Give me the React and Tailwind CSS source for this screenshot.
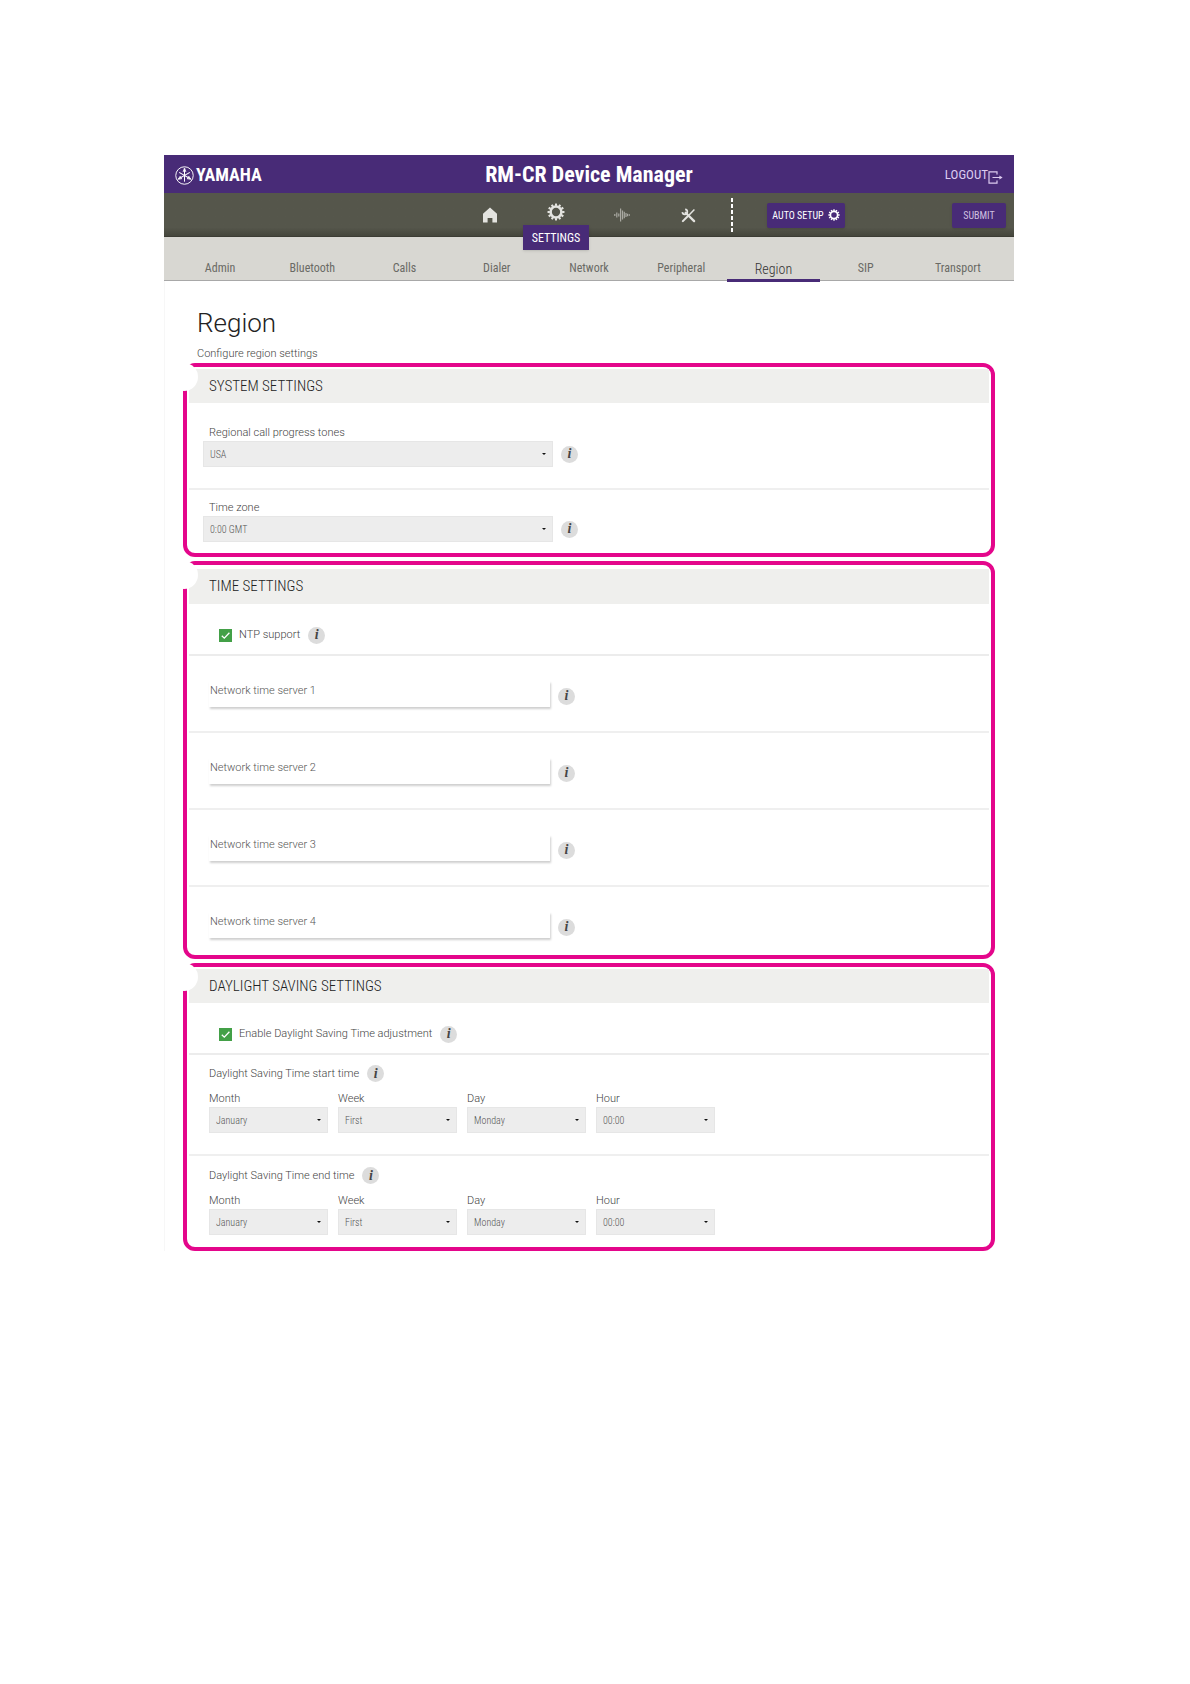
import { useState } from "react";

const TABS = ["Admin", "Bluetooth", "Calls", "Dialer", "Network", "Peripheral", "Region", "SIP", "Transport"];

function BrandMark() {
  return (
    <svg viewBox="0 0 20 20" className="size-[19px]" fill="none" stroke="currentColor" aria-hidden="true">
      <circle cx="10" cy="10" r="9.2" strokeWidth="1" />
      {[0, 120, 240].map((a) => (
        <g key={a} transform={`rotate(${a} 10 10)`}>
          <path d="M10 16.5V3" strokeWidth="1.1" />
          <path d="M8.5 6 10 2l1.5 4M8.4 5.4h3.2" strokeWidth="0.8" />
        </g>
      ))}
    </svg>
  );
}

function GearIcon({ className }) {
  return (
    <svg viewBox="0 0 20 20" className={className} fill="none" stroke="currentColor" aria-hidden="true">
      <circle cx="10" cy="10" r="6" strokeWidth="2.8" />
      {[0, 30, 60, 90, 120, 150, 180, 210, 240, 270, 300, 330].map((a) => (
        <path key={a} d="M10 3.2V.6" strokeWidth="2.3" transform={`rotate(${a} 10 10)`} />
      ))}
    </svg>
  );
}

function HomeIcon() {
  return (
    <svg viewBox="0 0 16 16" className="size-4" fill="currentColor" aria-hidden="true">
      <path d="M8 .5 1 6.8V15.5h4.6v-4.6h4.8v4.6H15V6.8z" />
    </svg>
  );
}

function WaveIcon() {
  return (
    <svg viewBox="0 0 16 16" className="size-4" stroke="currentColor" strokeWidth="1.2" aria-hidden="true">
      <path d="M.8 7v2M2.8 5.5v5M4.8 6.5v3M6.6 1.5v13M8.5 3.5v9M10.3 4.8v6.4M12 6v4M13.6 6.8v2.4M15.4 7.3v1.4" />
    </svg>
  );
}

function ToolsIcon() {
  return (
    <svg viewBox="0 0 16 16" className="size-[15px]" fill="none" stroke="currentColor" aria-hidden="true">
      <path d="M5 5l9 9" strokeWidth="2.4" strokeLinecap="round" />
      <path d="M4.4 1.4A2.7 2.7 0 1 1 1.4 4.4" strokeWidth="1.8" />
      <path d="M14.3 1.7 8.6 7.4" strokeWidth="1.6" />
      <path d="M7.2 8.8 2 14" strokeWidth="2.2" strokeLinecap="round" />
    </svg>
  );
}

function LogoutIcon() {
  return (
    <svg viewBox="0 0 15 13" className="mt-1 h-[13px] w-[15px]" fill="none" stroke="currentColor" strokeWidth="1.2" aria-hidden="true">
      <path d="M9 3.6V.8H1v11.4h8V9.4M4.5 6.5h8" />
      <path d="M11.4 4.4 14.6 6.5l-3.2 2.1z" fill="currentColor" stroke="none" />
    </svg>
  );
}

function Info({ about }) {
  return (
    <button
      type="button"
      aria-label={`About ${about}`}
      className="flex size-[17px] shrink-0 items-center justify-center rounded-full bg-[#dcdcdc] font-['Liberation_Serif',serif] text-[14px] leading-none font-bold text-[#444] italic"
    >
      i
    </button>
  );
}

function Select({ id, value }) {
  return (
    <div className="relative">
      <select
        id={id}
        defaultValue={value}
        className="block h-[26px] w-full appearance-none border border-[#e6e6e6] bg-[#ededed] px-1.5 font-['Roboto_Condensed',sans-serif] text-[10px] text-[#555]"
      >
        <option>{value}</option>
      </select>
      <svg viewBox="0 0 4 2" className="pointer-events-none absolute top-3 right-[7px] h-0.5 w-1" aria-hidden="true">
        <path d="M0 0h4L2 2z" fill="#111" />
      </svg>
    </div>
  );
}

function Section({ title, tall, children }) {
  return (
    <section className={tall ? "relative rounded-xl border-4 border-[#e4068b] px-0.5 pt-1" : "relative rounded-xl border-4 border-[#e4068b] px-0.5 pt-0.5"}>
      <span className="absolute -top-1 -left-[17px] size-7 rounded-full bg-white" />
      <h2
        className={
          tall
            ? "flex h-[35px] items-center bg-[#efefed] pl-5 font-['Roboto_Condensed',sans-serif] text-[15px] font-light text-[#222]"
            : "flex h-[34px] items-center bg-[#efefed] pl-5 font-['Roboto_Condensed',sans-serif] text-[15px] font-light text-[#222]"
        }
      >
        {title}
      </h2>
      {children}
    </section>
  );
}

function SelectRow({ id, label, value, className }) {
  return (
    <div className={`pl-3.5 ${className}`}>
      <label htmlFor={id} className="block pl-1.5 text-[11px] leading-4 text-[#444]">
        {label}
      </label>
      <div className="flex items-center gap-2">
        <div className="w-[350px]">
          <Select id={id} value={value} />
        </div>
        <Info about={label} />
      </div>
    </div>
  );
}

function CheckRow({ id, label }) {
  const [on, setOn] = useState(true);
  return (
    <div className="flex h-[52px] items-center border-b-2 border-[#ececec] pt-3 pl-[30px]">
      <span className="relative flex">
        <input
          id={id}
          type="checkbox"
          checked={on}
          onChange={(e) => setOn(e.target.checked)}
          className="size-[13px] appearance-none border border-[#43a047] checked:bg-[#43a047]"
        />
        {on && (
          <svg viewBox="0 0 13 13" className="pointer-events-none absolute inset-0" fill="none" stroke="#fff" strokeWidth="1.3" aria-hidden="true">
            <path d="M2.8 6.8 5.3 9.2 10.4 3.8" />
          </svg>
        )}
      </span>
      <label htmlFor={id} className="mr-2 ml-[7px] text-[11px] leading-4 text-[#444]">
        {label}
      </label>
      <Info about={label} />
    </div>
  );
}

function ServerRow({ n, last }) {
  const id = `ntp-server-${n}`;
  return (
    <div className={last ? "h-[68px] pt-[25px] pl-5" : "h-[77px] border-b-2 border-[#efefef] pt-[25px] pl-5"}>
      <div className="flex items-center gap-2">
        <div className="relative w-[341px]">
          <label htmlFor={id} className="absolute top-0.5 left-px text-[11px] leading-4 text-[#555]">
            Network time server {n}
          </label>
          <input id={id} type="text" className="block h-[26px] w-full bg-white shadow-[1px_2px_2px_#cfcfcf] outline-none" />
        </div>
        <span className="mt-1">
          <Info about={`network time server ${n}`} />
        </span>
      </div>
    </div>
  );
}

function DstRow({ name, className }) {
  const fields = [
    ["Month", "January"],
    ["Week", "First"],
    ["Day", "Monday"],
    ["Hour", "00:00"],
  ];
  return (
    <fieldset className={`block pl-5 ${className}`}>
      <div className="flex items-center gap-2">
        <span className="text-[11px] leading-4 text-[#444]">Daylight Saving Time {name} time</span>
        <Info about={`Daylight Saving Time ${name} time`} />
      </div>
      <div className="mt-[9px] flex gap-2.5">
        {fields.map(([label, value]) => (
          <div key={label} className="w-[119px]">
            <label htmlFor={`${name}-${label}`} className="block text-[11px] leading-4 text-[#444]">
              {label}
            </label>
            <Select id={`${name}-${label}`} value={value} />
          </div>
        ))}
      </div>
    </fieldset>
  );
}

export default function App() {
  return (
    <div className="min-h-screen bg-white pt-[155px] pr-[176px] pb-16 pl-[164px] font-['Roboto',sans-serif] font-light">
      <header className="font-['Roboto_Condensed',sans-serif]">
        <div className="grid h-[38px] grid-cols-[1fr_auto_1fr] items-center bg-[#482b77] px-[11px] pt-0.5 text-white">
          <div className="flex items-center gap-0.5">
            <BrandMark />
            <span className="text-[18px] leading-6 font-bold">YAMAHA</span>
          </div>
          <h1 className="text-[22px] leading-7 font-bold">RM-CR Device Manager</h1>
          <a href="#logout" className="flex items-center justify-self-end text-[13px] font-normal text-[#dccbf0]">
            LOGOUT
            <LogoutIcon />
          </a>
        </div>

        <div className="grid h-11 grid-cols-[1fr_auto_1fr] border-b border-[#3c3c34] bg-linear-to-b from-[#55564b] from-80% to-[#45463c] text-[#e4e4e0]">
          <span />
          <nav className="flex" aria-label="Main">
            <a href="#home" aria-label="Home" className="flex w-[66px] items-center justify-center">
              <HomeIcon />
            </a>
            <a href="#settings" className="flex h-11 w-[66px] flex-col items-center gap-1 pt-2.5">
              <GearIcon className="size-[18px] shrink-0" />
              <span className="z-10 flex h-[25px] w-full shrink-0 items-center justify-center bg-[#482b77] text-[12px] font-normal text-white shadow">SETTINGS</span>
            </a>
            <a href="#audio" aria-label="Audio" className="flex w-[66px] items-center justify-center text-[#a9a9a2]">
              <WaveIcon />
            </a>
            <a href="#tools" aria-label="Tools" className="flex w-[66px] items-center justify-center">
              <ToolsIcon />
            </a>
          </nav>
          <div className="flex items-center pr-2 pl-2.5">
            <span className="h-[34px] w-0.5 bg-[repeating-linear-gradient(to_bottom,#fff_0_4px,transparent_4px_6px)]" />
            <button type="button" className="ml-[34px] flex h-[25px] w-[78px] items-center justify-center gap-1 rounded-xs bg-[#482b77] text-[10px] font-normal text-white shadow">
              AUTO SETUP
              <GearIcon className="size-3" />
            </button>
            <button type="button" className="ml-auto h-[25px] w-[54px] rounded-xs bg-[#482b77] text-[10px] font-normal text-[#cfc0e0] shadow">
              SUBMIT
            </button>
          </div>
        </div>

        <nav className="grid h-[44px] grid-cols-9 border-b border-[#a8a8a8] bg-[#d8d7d2] px-2.5" aria-label="Settings">
          {TABS.map((t) => (
            <a
              key={t}
              href={`#${t.toLowerCase()}`}
              className={
                t === "Region"
                  ? "-mb-0.5 flex items-end justify-center border-b-[3px] border-[#482b77] text-[14px] leading-5 text-[#333]"
                  : "flex items-end justify-center pb-0.5 text-[12px] leading-5 font-normal text-[#6a6a65]"
              }
            >
              {t}
            </a>
          ))}
        </nav>
      </header>

      <main className="border-l border-[#f7f7f7] pt-6 pr-[19px] pl-[18px]">
        <h2 className="pl-3.5 text-[26px] leading-9 text-[#222]">Region</h2>
        <p className="pt-[5px] pb-px pl-3.5 text-[11px] leading-4 text-[#444]">Configure region settings</p>
        <div className="flex flex-col gap-1">
          <Section title="SYSTEM SETTINGS">
            <SelectRow id="tones" label="Regional call progress tones" value="USA" className="h-[87px] border-b-2 border-[#efefef] pt-[22px]" />
            <SelectRow id="zone" label="Time zone" value="0:00 GMT" className="h-[63px] pt-2.5" />
          </Section>
          <Section title="TIME SETTINGS" tall>
            <CheckRow id="ntp" label="NTP support" />
            <ServerRow n={1} />
            <ServerRow n={2} />
            <ServerRow n={3} />
            <ServerRow n={4} last />
          </Section>
          <Section title="DAYLIGHT SAVING SETTINGS">
            <CheckRow id="dst" label="Enable Daylight Saving Time adjustment" />
            <DstRow name="start" className="h-[101px] border-b-2 border-[#efefef] pt-2.5" />
            <DstRow name="end" className="h-[91px] pt-[11px]" />
          </Section>
        </div>
      </main>
    </div>
  );
}
